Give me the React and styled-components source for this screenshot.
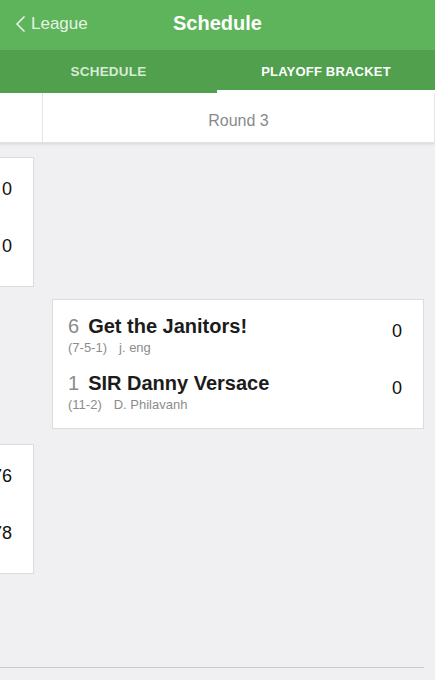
import React from "react";
import styled, { createGlobalStyle } from "styled-components";

const GlobalStyle = createGlobalStyle`
  html, body {
    margin: 0;
    padding: 0;
    background: #f0f0f2;
    font-family: "Liberation Sans", Arial, sans-serif;
    -webkit-font-smoothing: antialiased;
  }
  * { box-sizing: border-box; }
`;

const rounds = [
  {
    label: "Round 2",
    games: [
      [
        { seed: 3, name: "Fantasy Team", record: "(8-5)", owner: "owner", score: 0 },
        { seed: 6, name: "Get the Janitors!", record: "(7-5-1)", owner: "j. eng", score: 0 },
      ],
      [
        { seed: 2, name: "Team Two", record: "(9-4)", owner: "owner", score: 76 },
        { seed: 1, name: "SIR Danny Versace", record: "(11-2)", owner: "D. Philavanh", score: 78 },
      ],
    ],
  },
  {
    label: "Round 3",
    games: [
      [
        { seed: 6, name: "Get the Janitors!", record: "(7-5-1)", owner: "j. eng", score: 0 },
        { seed: 1, name: "SIR Danny Versace", record: "(11-2)", owner: "D. Philavanh", score: 0 },
      ],
    ],
  },
];

const App = () => {
  return (
    <Screen>
      <GlobalStyle />
      <NavBar>
        <BackLink>
          <svg width="11" height="18" viewBox="0 0 11 18">
            <path d="M9.5 1.5 L2 9 L9.5 16.5" fill="none" stroke="#e6f3e5" strokeWidth="1.6" />
          </svg>
          League
        </BackLink>
        <Title>Schedule</Title>
      </NavBar>
      <Tabs>
        <Tab>SCHEDULE</Tab>
        <Tab active>PLAYOFF BRACKET</Tab>
      </Tabs>
      <Viewport>
        <Track>
          <HeaderRow>
            {rounds.map((r) => (
              <RoundHead key={r.label}>{r.label}</RoundHead>
            ))}
          </HeaderRow>
          <Columns>
            {rounds.map((r, ri) => (
              <Column key={r.label} first={ri === 0}>
                {r.games.map((g, gi) => (
                  <Card key={gi}>
                    {g.map((t) => (
                      <TeamRow key={t.name}>
                        <TeamInfo>
                          <TeamLine>
                            <Seed>{t.seed}</Seed>
                            <TeamName>{t.name}</TeamName>
                          </TeamLine>
                          <Meta>
                            <span>{t.record}</span>
                            <span>{t.owner}</span>
                          </Meta>
                        </TeamInfo>
                        <Score>{t.score}</Score>
                      </TeamRow>
                    ))}
                  </Card>
                ))}
              </Column>
            ))}
          </Columns>
          <Divider />
        </Track>
      </Viewport>
    </Screen>
  );
};

export default App;

const Screen = styled.div`
  width: 435px;
  height: 680px;
  overflow: hidden;
  background: #f0f0f2;
`;

const NavBar = styled.div`
  height: 50px;
  background: #5db45a;
  display: flex;
  align-items: center;
  justify-content: center;
  position: relative;
`;

const BackLink = styled.div`
  position: absolute;
  left: 15px;
  top: 14px;
  display: flex;
  align-items: center;
  gap: 5px;
  color: #e6f3e5;
  font-size: 17px;
`;

const Title = styled.div`
  color: #fff;
  font-size: 20px;
  font-weight: 700;
  margin-top: -3px;
`;

const Tabs = styled.div`
  height: 43px;
  background: #50a04d;
  display: grid;
  grid-template-columns: 217px 1fr;
`;

const Tab = styled.div`
  display: flex;
  align-items: center;
  justify-content: center;
  font-size: ${({ active }) => (active ? "13px" : "13.5px")};
  font-weight: 700;
  letter-spacing: 0.2px;
  color: ${({ active }) => (active ? "#ffffff" : "#d6ebd5")};
  border-bottom: 3px solid ${({ active }) => (active ? "#ffffff" : "transparent")};
  padding-top: 2px;
`;

const Viewport = styled.div`
  overflow: hidden;
  height: 587px;
`;

const Track = styled.div`
  width: 783px;
  margin-left: -349px;
`;

const HeaderRow = styled.div`
  display: grid;
  grid-template-columns: 391px 392px;
  background: #fff;
  height: 50px;
  box-shadow: 0 1px 3px rgba(0, 0, 0, 0.12);
  border-bottom: 1px solid #e2e2e4;
  position: relative;
`;

const RoundHead = styled.div`
  display: flex;
  align-items: center;
  justify-content: center;
  font-size: 16px;
  color: #8a8a8a;
  border-left: 1px solid #e4e4e6;
  padding-top: 7px;
`;

const Columns = styled.div`
  display: grid;
  grid-template-columns: 391px 392px;
  height: 524px;
`;

const Column = styled.div`
  display: flex;
  flex-direction: column;
  gap: 157px;
  padding: ${({ first }) => (first ? "14px 8px 0 10px" : "156px 10px 0 10px")};
`;

const Card = styled.div`
  background: #fff;
  border: 1px solid #dcdcde;
  height: 130px;
  padding: 14px 15px 0 15px;
  display: flex;
  flex-direction: column;
  gap: 16px;
`;

const TeamRow = styled.div`
  display: flex;
  align-items: flex-start;
  justify-content: space-between;
`;

const TeamInfo = styled.div`
  display: flex;
  flex-direction: column;
  gap: 2px;
`;

const TeamLine = styled.div`
  display: flex;
  align-items: baseline;
  gap: 9px;
  font-size: 20px;
  line-height: 24px;
`;

const Seed = styled.span`
  color: #8a8a8a;
`;

const TeamName = styled.span`
  color: #1c1c1c;
  font-weight: 600;
`;

const Meta = styled.div`
  display: flex;
  gap: 12px;
  font-size: 13px;
  color: #8c8c8c;
  line-height: 15px;
`;

const Score = styled.div`
  font-size: 18px;
  line-height: 22px;
  color: #111;
  padding-right: 6px;
  margin-top: 6px;
`;

const Divider = styled.div`
  height: 1px;
  background: #c9c9cb;
  margin-right: 10px;
`;
